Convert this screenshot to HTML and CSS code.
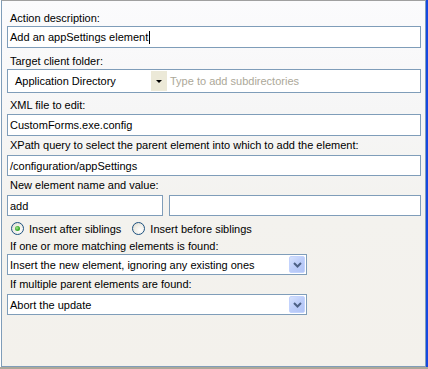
FILE: index.html
```html
<!DOCTYPE html>
<html>
<head>
<meta charset="utf-8">
<link rel="stylesheet" href="styles.css">
</head>
<body>
<div class="window">
  <div class="panel">
    <div class="label l1">Action description:</div>
    <div class="box tb22">Add an appSettings element<span class="caret"></span></div>

    <div class="label l2">Target client folder:</div>
    <div class="box folder">
      <span class="folder-name">Application Directory</span>
      <span class="folder-btn"><span class="tri"></span></span>
      <span class="placeholder">Type to add subdirectories</span>
    </div>

    <div class="label l3">XML file to edit:</div>
    <div class="box tb22">CustomForms.exe.config</div>

    <div class="label l4">XPath query to select the parent element into which to add the element:</div>
    <div class="box tb21">/configuration/appSettings</div>

    <div class="label l4">New element name and value:</div>
    <div class="pair">
      <div class="box tb21 name">add</div>
      <div class="box tb21 value"></div>
    </div>

    <div class="radios">
      <span class="radio checked"></span><span class="rtext first">Insert after siblings</span>
      <span class="radio"></span><span class="rtext">Insert before siblings</span>
    </div>

    <div class="label l6">If one or more matching elements is found:</div>
    <div class="box select">
      <span class="stext">Insert the new element, ignoring any existing ones</span>
      <span class="sbtn"><svg width="9" height="6" viewBox="0 0 9 6"><path d="M1 1 L4.5 4.5 L8 1" fill="none" stroke="#4d6185" stroke-width="2"/></svg></span>
    </div>

    <div class="label l4">If multiple parent elements are found:</div>
    <div class="box select">
      <span class="stext">Abort the update</span>
      <span class="sbtn"><svg width="9" height="6" viewBox="0 0 9 6"><path d="M1 1 L4.5 4.5 L8 1" fill="none" stroke="#4d6185" stroke-width="2"/></svg></span>
    </div>
  </div>
</div>
</body>
</html>
```

FILE: styles.css
```css
* { box-sizing: border-box; }
html, body { margin: 0; padding: 0; }
body {
  width: 428px;
  height: 369px;
  overflow: hidden;
  font-family: Tahoma, "Liberation Sans", Arial, sans-serif;
  font-size: 11px;
  color: #000;
  background: #aca899;
}
.window {
  width: 428px;
  height: 367px;
  border-right: 2px solid #1548e0;
  background: #fff;
  padding-left: 1px;
}
.panel {
  height: 367px;
  border-top: 1px solid #a0a0a0;
  border-left: 1px solid #7f9db9;
  border-right: 1px solid #7f9db9;
  border-bottom: 1px solid #7f9db9;
  background: linear-gradient(#fbfbfd 0%, #f6f6f6 30%, #f3f2ee 60%, #f3f1ec 100%);
  padding: 10px 5px 0 5px;
  display: flex;
  flex-direction: column;
  align-items: flex-start;
}
.label {
  height: 14px;
  line-height: 14px;
  padding-left: 3px;
  white-space: nowrap;
  margin-bottom: 1px;
}
.l2 { margin-top: 6px; }
.l3 { margin-top: 5px; margin-bottom: 2px; }
.l4 { margin-top: 2px; margin-bottom: 3px; }
.l6 { margin-top: 3px; margin-bottom: 1px; }
.box {
  background: #fff;
  border: 1px solid #7f9db9;
  width: 414px;
  display: flex;
  align-items: center;
  padding-left: 2px;
  white-space: nowrap;
}
.tb22 { height: 22px; }
.tb21 { height: 21px; }
.caret {
  display: inline-block;
  width: 1px;
  height: 13px;
  background: #000;
  margin-left: 1px;
}
.folder { height: 24px; padding-left: 7px; }
.folder-name { width: 136px; }
.folder-btn {
  width: 16px;
  height: 20px;
  background: #ece9d8;
  display: flex;
  align-items: center;
  justify-content: center;
}
.tri {
  width: 0; height: 0;
  border-left: 3px solid transparent;
  border-right: 3px solid transparent;
  border-top: 3px solid #000;
}
.placeholder { color: #aca899; margin-left: 3px; }
.pair { display: flex; gap: 6px; width: 414px; }
.pair .name { width: 156px; }
.pair .value { flex: 1; width: auto; }
.radios {
  display: flex;
  align-items: center;
  height: 15px;
  margin-top: 5px;
  padding-left: 4px;
}
.radio {
  width: 13px;
  height: 13px;
  border-radius: 50%;
  border: 1px solid #1c5180;
  background: radial-gradient(circle at 65% 65%, #fff 0%, #eceae2 60%, #d6d4c8 100%);
  position: relative;
  margin-right: 5px;
}
.radio.checked::after {
  content: "";
  position: absolute;
  left: 3px; top: 3px;
  width: 5px; height: 5px;
  border-radius: 50%;
  background: radial-gradient(circle at 40% 40%, #a9e69c 0%, #3fae2e 50%, #21a121 100%);
}
.rtext.first { margin-right: 11px; }
.select {
  width: 300px;
  height: 21px;
  padding-left: 2px;
  padding-right: 1px;
  justify-content: space-between;
}
.sbtn {
  width: 16px;
  height: 17px;
  border: 1px solid #c3d3fd;
  border-radius: 2px;
  background: linear-gradient(135deg, #d6e2fd 0%, #bccdf9 50%, #b1c4f5 100%);
  display: flex;
  align-items: center;
  justify-content: center;
}
```
